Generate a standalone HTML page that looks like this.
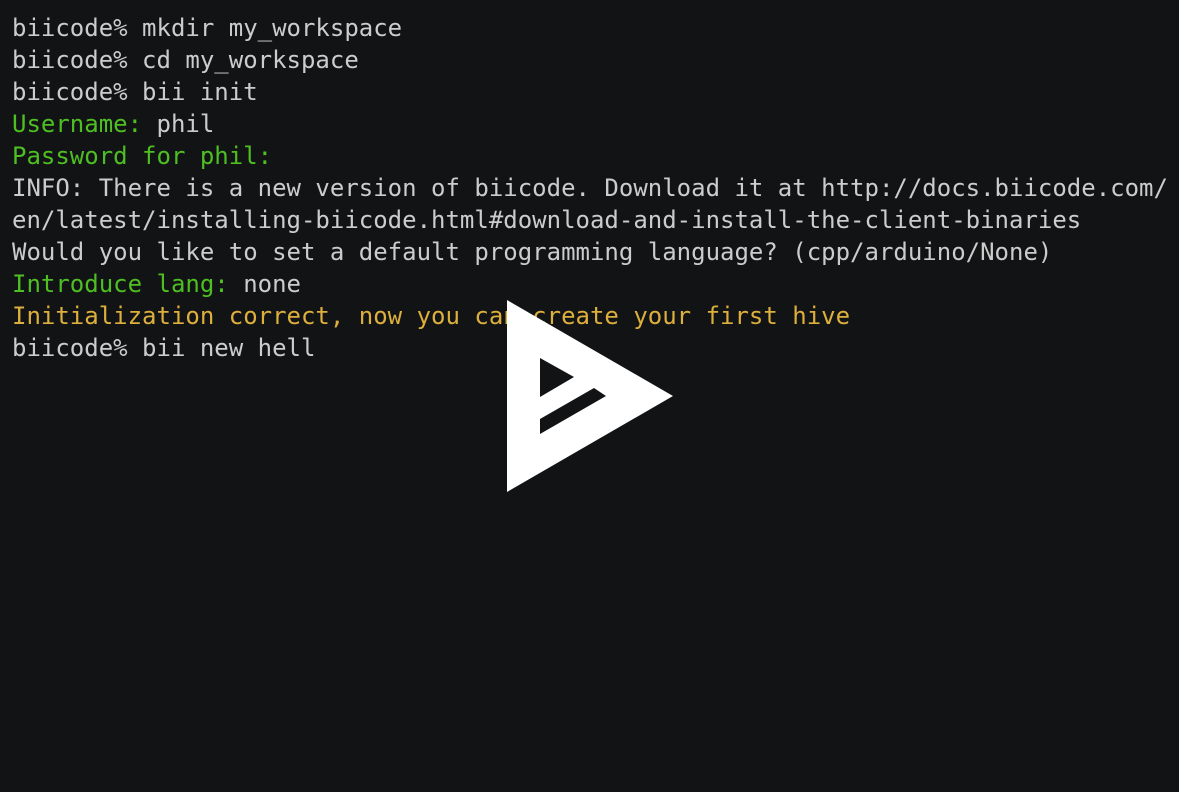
<!DOCTYPE html>
<html><head><style>
html,body{margin:0;padding:0;background:#121314;width:1179px;height:792px;overflow:hidden}
pre{margin:0;padding:12px 0 0 12px;font-family:"DejaVu Sans Mono","Liberation Mono",monospace;font-size:24px;line-height:32px;color:#cccccc;white-space:pre}
.g{color:#4ebf22}.y{color:#ddaf3c}
svg{position:absolute;left:0;top:0}
</style></head><body>
<pre>biicode% mkdir my_workspace
biicode% cd my_workspace
biicode% bii init
<span class="g">Username:</span> phil
<span class="g">Password for phil:</span>
INFO: There is a new version of biicode. Download it at http://docs.biicode.com/
en/latest/installing-biicode.html#download-and-install-the-client-binaries
Would you like to set a default programming language? (cpp/arduino/None)
<span class="g">Introduce lang:</span> none
<span class="y">Initialization correct, now you can create your first hive</span>
biicode% bii new hell</pre>
<svg width="1179" height="792"><path fill="#fff" fill-rule="evenodd" d="M507 300 L673 396 L507 492 Z M540 358 L574 377 L540 397 Z M540 419 L594 388 L606 396 L540 434 Z"/></svg>
</body></html>
